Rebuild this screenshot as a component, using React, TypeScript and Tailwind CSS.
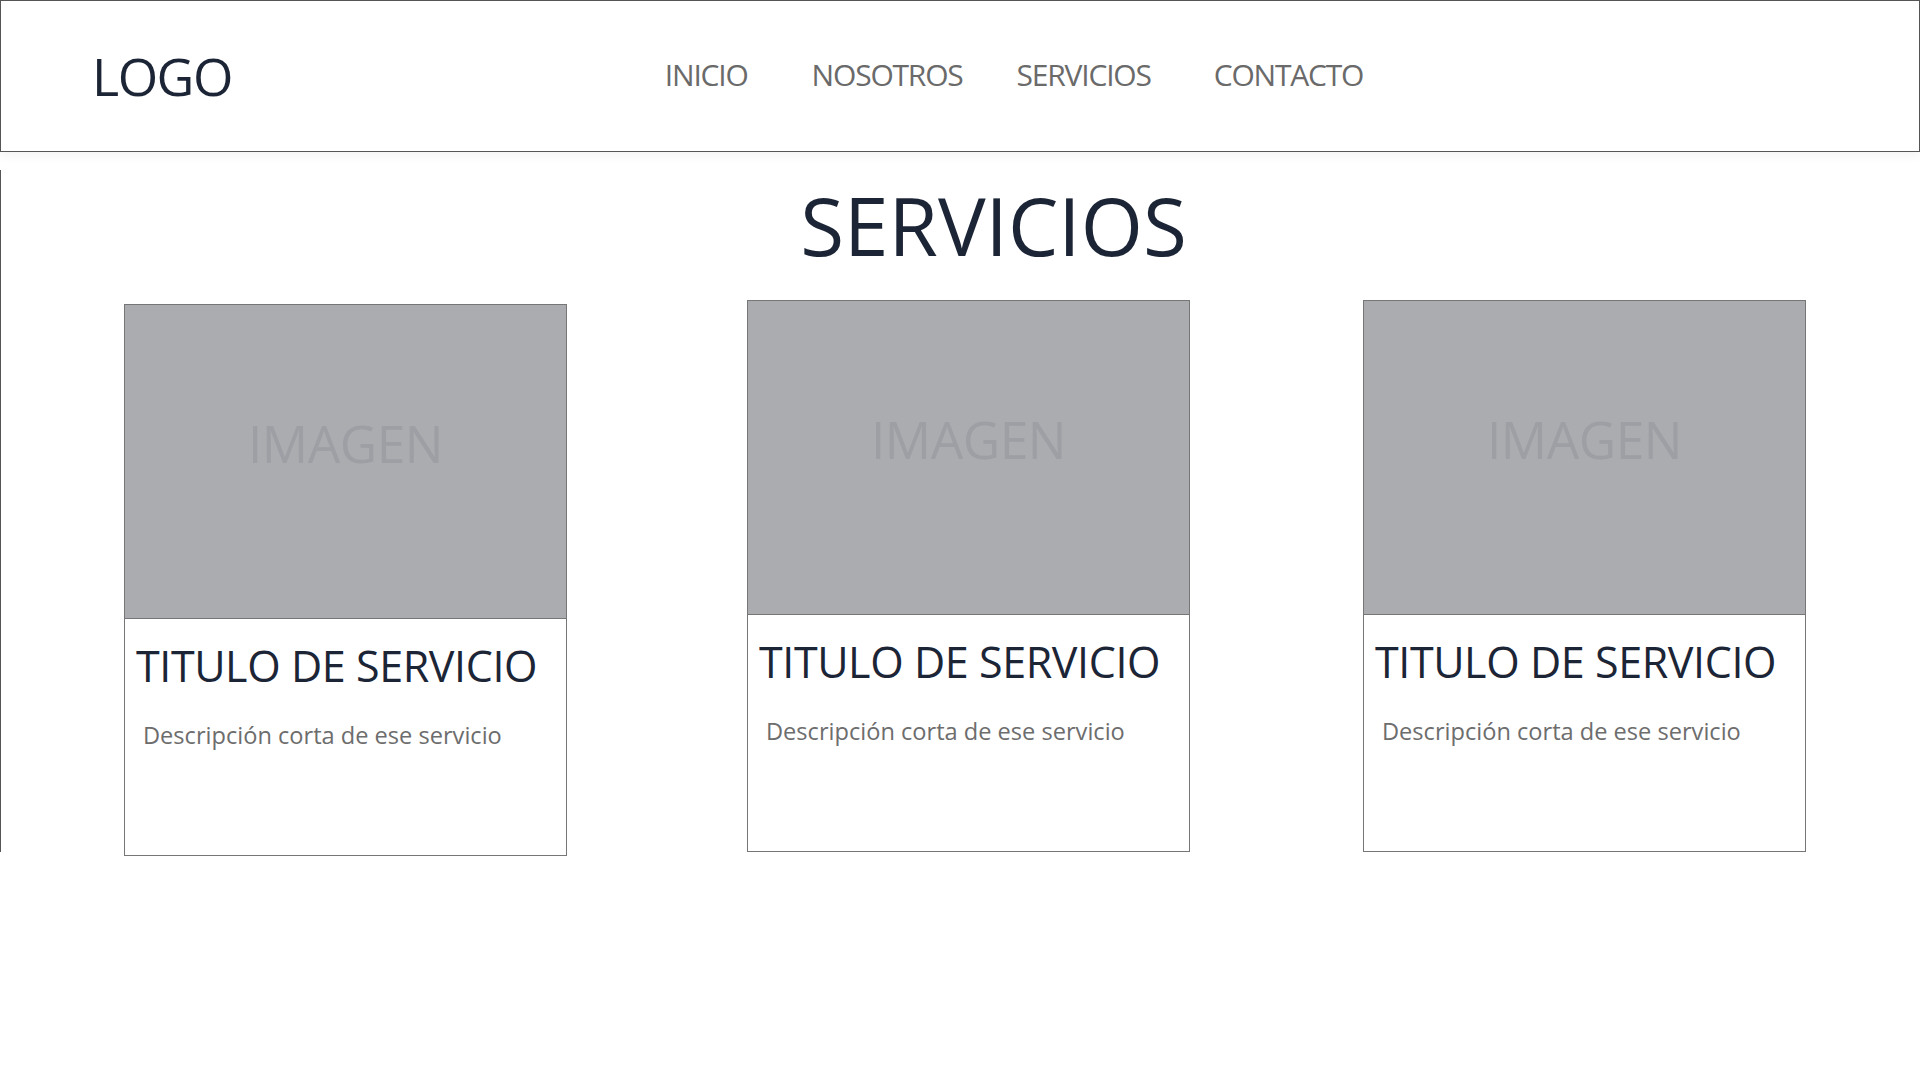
import React from "react";

const font = { fontFamily: '"Open Sans", "Noto Sans", sans-serif' };

function Card({ shift }: { shift?: boolean }) {
  return (
    <div
      className={
        "w-[443px] h-[552px] border border-[#767676] bg-white flex flex-col shrink-0 " +
        (shift ? "mt-[4px] -mb-[4px]" : "")
      }
    >
      <div className="h-[314px] bg-[#abacaf] border-b border-[#767676] flex items-center justify-center pb-[36px]">
        <span className="text-[51.5px] leading-none text-[#9d9fa5] tracking-[-0.5px]">IMAGEN</span>
      </div>
      <div className="pt-[18px] pl-[11px]">
        <h3 className="text-[43px] leading-[57px] text-[#1c2536] tracking-[-0.4px]">TITULO DE SERVICIO</h3>
        <p className="mt-[26px] pl-[7px] text-[23.6px] leading-[31px] text-[#6d6d6d]">
          Descripción corta de ese servicio
        </p>
      </div>
    </div>
  );
}

export default function App() {
  return (
    <div className="w-[1920px] h-[1080px] bg-white overflow-hidden" style={font}>
      <header className="h-[152px] border border-[#555555] flex items-center pl-[91px] shadow-[0_4px_10px_rgba(0,0,0,0.05)]">
        <div className="text-[52px] leading-none text-[#1c2536] tracking-[-1.5px]">LOGO</div>
        <nav className="flex items-center text-[30px] leading-none text-[#6a6a6a] tracking-[-1.2px] ml-[433px] -mt-[2px]">
          <a>INICIO</a>
          <a className="ml-[64px]">NOSOTROS</a>
          <a className="ml-[54px]">SERVICIOS</a>
          <a className="ml-[63px]">CONTACTO</a>
        </nav>
      </header>
      <section className="mt-[18px] border-l border-[#555555]">
        <h1 className="text-center text-[80px] leading-[109px] text-[#1c2536] tracking-[0px] pl-[66px]">
          SERVICIOS
        </h1>
        <div className="flex items-start mt-[21px] pl-[123px]">
          <Card shift />
          <div className="ml-[180px]">
            <Card />
          </div>
          <div className="ml-[173px]">
            <Card />
          </div>
        </div>
      </section>
    </div>
  );
}
